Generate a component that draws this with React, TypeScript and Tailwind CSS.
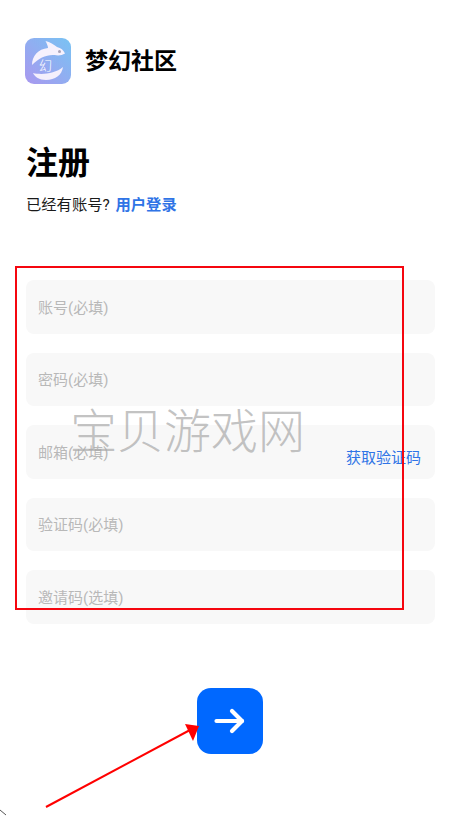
const cjk = "font-['Roboto','Noto_Sans_CJK_SC',sans-serif]";

const fields = [
  { placeholder: "账号(必填)" },
  { placeholder: "密码(必填)" },
  { placeholder: "邮箱(必填)", action: "获取验证码" },
  { placeholder: "验证码(必填)" },
  { placeholder: "邀请码(选填)" },
];

function Logo() {
  return (
    <svg width="46" height="46" viewBox="0 0 46 46" className="shrink-0">
      <defs>
        <linearGradient id="logoBg" x1="0" y1="1" x2="1" y2="0">
          <stop offset="0" stopColor="#a998ef" />
          <stop offset="1" stopColor="#78c3f3" />
        </linearGradient>
      </defs>
      <rect width="46" height="46" rx="9" fill="url(#logoBg)" />
      <path
        d="M7 27C7 18 13 11 23 10C23 8 22 6 20.500 3C25 4 29 6.500 32 9C36 10 38.500 12 40 15.500C37 17.500 33 18 29.500 17C21 16.500 14 20 7 27Z"
        fill="#f6f1fd"
      />
      <circle cx="34.500" cy="13.500" r="1.500" fill="#a9a3b8" />
      <path d="M8 35C16 37 30 36 38 29C37 37 30 42 21 42C14 42 10 39 8 35Z" fill="#f4effc" />
      <text x="14" y="32" fontSize="13" fontWeight="300" fill="#ffffff" fontFamily="Noto Sans CJK SC, sans-serif">
        幻
      </text>
    </svg>
  );
}

function Field({ placeholder, action }: { placeholder: string; action?: string }) {
  return (
    <div className="flex h-[53.500px] items-center rounded-lg bg-[#f8f8f8] pl-3 pr-[14px]">
      <input
        readOnly
        placeholder={placeholder}
        className="relative top-px min-w-0 flex-1 bg-transparent text-[15px] outline-none placeholder:text-[#b8b8b8]"
      />
      {action && <span className="relative top-[6px] text-[15px] text-[#2f74e6]">{action}</span>}
    </div>
  );
}

export default function App() {
  return (
    <div className={`relative h-[816px] w-[459px] overflow-hidden bg-white ${cjk}`}>
      <div className="flex flex-col px-[25px] pt-[38px]">
        <div className="flex items-center gap-[14px]">
          <Logo />
          <span className="relative top-px text-[23px] font-bold text-black">梦幻社区</span>
        </div>

        <h1 className="mt-[55px] pl-px text-[32px] font-bold leading-[48px] text-black">注册</h1>
        <p className="mt-[7px] pl-px text-[15.300px] leading-[22px] text-[#1a1a1a]">
          已经有账号?&nbsp;<span className="ml-[2px] font-bold text-[#2f74e6]">用户登录</span>
        </p>

        <div className="ml-px mt-[64px] flex w-[409px] flex-col gap-[19.100px]">
          {fields.map((f) => (
            <Field key={f.placeholder} placeholder={f.placeholder} action={f.action} />
          ))}
        </div>

        <button className="mx-auto mt-[64px] flex h-[66px] w-[66px] items-center justify-center rounded-[14px] bg-[#0068ff]">
          <svg width="32" height="26" viewBox="0 0 32 26" fill="none" stroke="#ffffff" strokeWidth="4.200" strokeLinecap="round" strokeLinejoin="round">
            <path d="M2.500 13H28" />
            <path d="M18 3L28 13L18 23" />
          </svg>
        </button>
      </div>

      {/* stuff pasted on top of the screenshot */}
      <div className="absolute left-[15px] top-[266px] h-[344px] w-[389px] border-2 border-[#f5060f]" />
      <div className="absolute left-[70px] top-[397px] whitespace-nowrap text-[47px] font-light leading-[62px] text-[#a8a8a8]/70 font-['Noto_Sans_CJK_SC',sans-serif]">
        宝贝游戏网
      </div>
      <svg className="absolute left-0 top-[720px]" width="200" height="96" viewBox="0 0 200 96">
        <path d="M46 87L190 10" stroke="#ff0000" strokeWidth="2" />
        <path d="M199 6L185 4L193 21Z" fill="#ff0000" />
        <path d="M0 90L6 95" stroke="#555555" strokeWidth="1" />
      </svg>
    </div>
  );
}
